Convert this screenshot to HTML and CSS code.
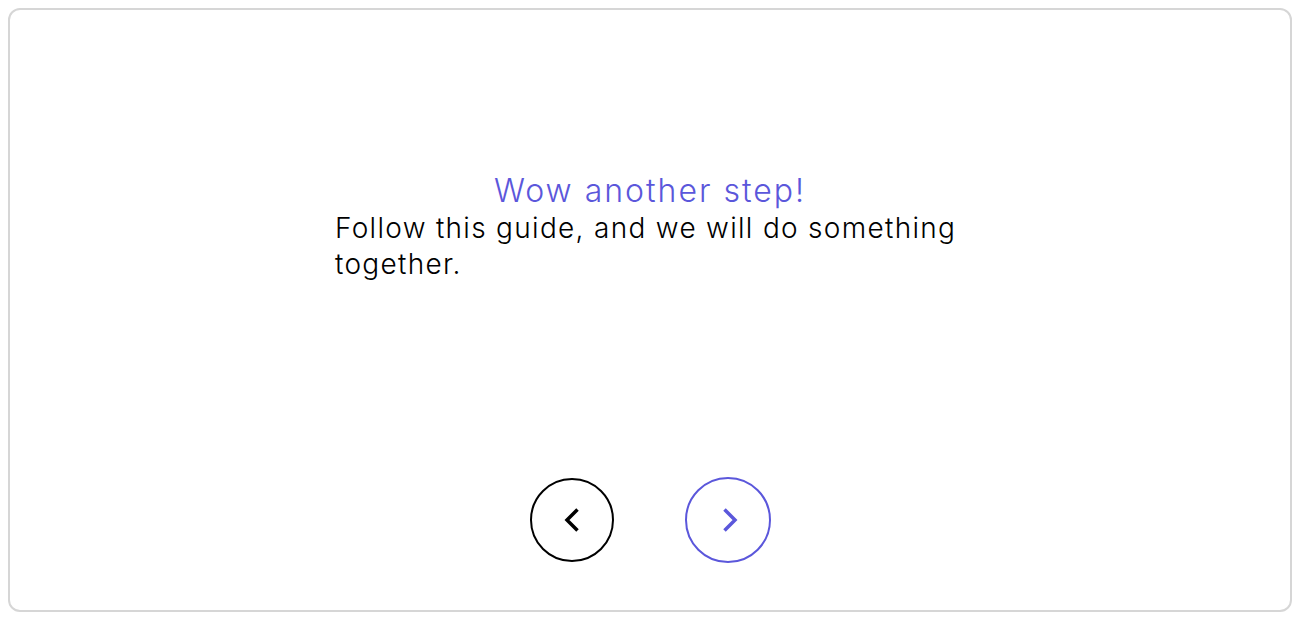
FILE: index.html
```html
<!DOCTYPE html>
<html>
<head>
<meta charset="utf-8">
<link rel="stylesheet" href="styles.css">
</head>
<body>
<div class="card">
  <div class="content">
    <h2 class="title">Wow another step!</h2>
    <p class="text">Follow this guide, and we will do something together.</p>
  </div>
  <div class="nav">
    <button class="btn prev" aria-label="Previous">
      <svg width="20" height="28" viewBox="0 0 20 28"><path d="M15.5 3.5 L5 14 L15.5 24.5" fill="none" stroke="#000" stroke-width="3.5"/></svg>
    </button>
    <button class="btn next" aria-label="Next">
      <svg class="chev-next" width="20" height="28" viewBox="0 0 20 28"><path d="M4.5 3.5 L15 14 L4.5 24.5" fill="none" stroke="#5b57db" stroke-width="3.5"/></svg>
    </button>
  </div>
</div>
</body>
</html>
```

FILE: styles.css
```css
html, body {
  margin: 0;
  padding: 0;
  background: #fff;
}
body {
  padding: 8px;
  font-family: Inter, "Liberation Sans", sans-serif;
}
.card {
  box-sizing: border-box;
  width: 1284px;
  height: 604px;
  border: 2px solid #d6d6d6;
  border-radius: 12px;
  display: flex;
  flex-direction: column;
  align-items: center;
}
.content {
  width: 630px;
  margin-top: 162px;
}
.title {
  margin: 0;
  text-align: center;
  font-weight: 300;
  font-size: 32px;
  line-height: 38px;
  letter-spacing: 2px;
  color: #5b57db;
}
.text {
  margin: 0;
  font-weight: 300;
  font-size: 28px;
  line-height: 36px;
  letter-spacing: 1.3px;
  color: #000;
}
.nav {
  margin-top: auto;
  margin-bottom: 47px;
  padding-left: 1px;
  display: flex;
  align-items: center;
  gap: 71px;
}
.btn {
  box-sizing: border-box;
  border-radius: 50%;
  background: #fff;
  display: flex;
  align-items: center;
  justify-content: center;
  padding: 0;
}
.prev {
  width: 84px;
  height: 84px;
  border: 2px solid #000;
}
.next {
  width: 86px;
  height: 86px;
  border: 2px solid #5b57db;
}
.chev-next {
  margin-left: 3px;
}
```
